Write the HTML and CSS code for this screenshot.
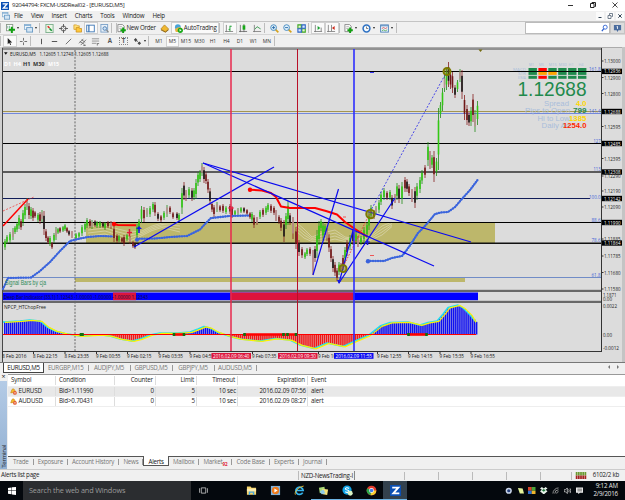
FILE: index.html
```html
<!DOCTYPE html>
<html lang="en">
<head>
    <meta charset="UTF-8">
    <title>92044794: FXCM-USDReal02 - [EURUSD,M5]</title>
    <link rel="stylesheet" href="styles.css">
</head>
<body>
    <!-- Icon shapes shared by the toolbars -->
    <svg class="defs" width="0" height="0">
        <symbol id="logo" viewBox="0 0 10 10"><rect width="10" height="10" fill="#0b4fb3"/><path d="M2 2.4h5.5L3 7.6h5.5" fill="none" stroke="#fff" stroke-width="1.7"/></symbol>
        <symbol id="windows" viewBox="0 0 10 10"><rect x=".5" y=".5" width="7" height="5.5" fill="#eef5fb" stroke="#8eb4d4"/><path d="M.5 1.5h7" stroke="#6ca0cc"/><rect x="3" y="4" width="6.5" height="5" fill="#d4e6f5" stroke="#6899c4"/></symbol>
        <symbol id="newchart" viewBox="0 0 10 10"><rect x=".5" y=".5" width="7" height="7" fill="#fff" stroke="#8a9a8a"/><path d="M2 5V2m2 3V2" stroke="#7a9"/><path d="M6.5 3v7M3 6.5h7" stroke="#12a012" stroke-width="2.2"/></symbol>
        <symbol id="market" viewBox="0 0 10 10"><rect x="1" y=".5" width="8" height="9" fill="#e9f7e4" stroke="#7cae8c"/><path d="M3 2.5l2 2" stroke="#e02020" stroke-width="1.6"/><path d="M5 5l2.5 2.5" stroke="#109030" stroke-width="1.8"/></symbol>
        <symbol id="target" viewBox="0 0 10 10"><circle cx="5" cy="5" r="2.8" fill="none" stroke="#555"/><path d="M5 0v4M5 6v4M0 5h4M6 5h4" stroke="#555"/></symbol>
        <symbol id="folder" viewBox="0 0 10 10"><path d="M1 1h3l1 1h2v4H1z" fill="#ffe07a" stroke="#d39a20" stroke-width=".8"/><path d="M3.5 4h3l1 1h2v4h-6z" fill="#ffc83a" stroke="#c98a18" stroke-width=".8"/></symbol>
        <symbol id="panel" viewBox="0 0 10 10"><rect x=".8" y="1.3" width="8.4" height="7.4" fill="#fff" stroke="#3c76b5"/><path d="M3.2 1v8" stroke="#3c76b5" stroke-width="1.4"/></symbol>
        <symbol id="tester" viewBox="0 0 10 10"><rect x="1" y=".5" width="7.5" height="8.5" fill="#e8f0f8" stroke="#7aa0c8"/><circle cx="5.3" cy="5" r="2" fill="#cfe4f7" stroke="#4a7ab0"/><path d="M7 6.6l2.5 2.6" stroke="#888" stroke-width="1.3"/></symbol>
        <symbol id="order" viewBox="0 0 10 10"><path d="M1 .5h5l2 2v6H1z" fill="#f7f7f7" stroke="#888"/><path d="M2.5 3h3m-3 2h3" stroke="#999" stroke-width=".7"/><path d="M6.8 4v6M3.8 7h6" stroke="#12a012" stroke-width="2.1"/></symbol>
        <symbol id="gold" viewBox="0 0 10 10"><path d="M1 5.5L5 1l4.5 4.5L6 9z" fill="#f0b830" stroke="#b07a10" stroke-width=".8"/><path d="M1 6.5L6 9l3.5-2.5" fill="none" stroke="#8a6010"/></symbol>
        <symbol id="auto" viewBox="0 0 10 10"><circle cx="4.3" cy="3.6" r="3.2" fill="#49a4d8"/><path d="M1 6c3-3 6-3 8-1L6 9H2z" fill="#e8b440"/><circle cx="7" cy="7" r="2.9" fill="#18a818"/><path d="M6.2 5.6l2.2 1.4-2.2 1.4z" fill="#fff"/></symbol>
        <symbol id="bars" viewBox="0 0 10 10"><path d="M1.5 1v8M0 8.3h9" stroke="#777" stroke-width=".9"/><path d="M5.5 2v6M5.5 2.5h2M4 6h1.5" stroke="#18a030"/></symbol>
        <symbol id="candle" viewBox="0 0 10 10"><path d="M1.5 1v8M0 8.3h9M5.5 0v9" stroke="#666" stroke-width=".9"/><rect x="4" y="1.5" width="3" height="4.8" fill="#18a818"/></symbol>
        <symbol id="line" viewBox="0 0 10 10"><path d="M1.5 1v8M0 8.3h9" stroke="#777" stroke-width=".9"/><path d="M2 6l2.5-3 4 2.5" fill="none" stroke="#3a9a50"/></symbol>
        <symbol id="zin" viewBox="0 0 10 10"><path d="M6 6l3.3 3.3" stroke="#d6a21c" stroke-width="1.8"/><circle cx="4" cy="4" r="3.2" fill="#dff0fb" stroke="#3f86bd"/><path d="M2.3 4h3.4M4 2.3v3.4" stroke="#2468a8"/></symbol>
        <symbol id="zout" viewBox="0 0 10 10"><path d="M6 6l3.3 3.3" stroke="#d6a21c" stroke-width="1.8"/><circle cx="4" cy="4" r="3.2" fill="#dff0fb" stroke="#3f86bd"/><path d="M2.3 4h3.4" stroke="#2468a8"/></symbol>
        <symbol id="tile" viewBox="0 0 10 10"><path d="M1 1h3.8v3.7H1zM5.4 5.3h3.8V9H5.4z" fill="#e4f5d8" stroke="#3ba51c" stroke-width="1.2"/><path d="M5.4 1h3.8v3.7H5.4zM1 5.3h3.8V9H1z" fill="#d9e8ff" stroke="#2a62c4" stroke-width="1.2"/></symbol>
        <symbol id="scroll" viewBox="0 0 10 10"><path d="M1.5 1v8M0 8.3h9M8 4v4" stroke="#777" stroke-width=".9"/><path d="M4 2.2l3 2.3-3 2.3z" fill="#18a030"/></symbol>
        <symbol id="shift" viewBox="0 0 10 10"><path d="M1.5 1v8M0 8.3h9M5 1v7" stroke="#777" stroke-width=".9"/><path d="M8.5 2.2l-3 2.3 3 2.3z" fill="#d02818"/></symbol>
        <symbol id="clock" viewBox="0 0 10 10"><circle cx="5" cy="5" r="3.8" fill="#f6fbff" stroke="#2f72c4" stroke-width="1.7"/><path d="M5 2.8V5h2" fill="none" stroke="#555" stroke-width=".8"/></symbol>
        <symbol id="template" viewBox="0 0 10 10"><rect x=".7" y="1" width="8.6" height="8" fill="#eef6ff" stroke="#4a80b8"/><path d="M1 2h8" stroke="#4a80b8"/><path d="M2 5l2-1 2 1 2-1" fill="none" stroke="#c33" stroke-width=".8"/><path d="M2 7.5l2-1 2 1 2-1" fill="none" stroke="#393" stroke-width=".8"/></symbol>
        <symbol id="cursor" viewBox="0 0 10 10"><path d="M3 1v7l1.7-1.6L5.8 9l1-.5-1.1-2.4H8z" fill="#222"/></symbol>
        <symbol id="cross" viewBox="0 0 10 10"><path d="M5 1v3M5 6v3M1 5h3M6 5h3" stroke="#555" stroke-width=".9"/></symbol>
        <symbol id="vline" viewBox="0 0 10 10"><path d="M5 2v6" stroke="#444"/></symbol>
        <symbol id="hline" viewBox="0 0 10 10"><path d="M2 5h6" stroke="#444"/></symbol>
        <symbol id="trend" viewBox="0 0 10 10"><path d="M2 8l6-6" stroke="#555" stroke-width=".9"/></symbol>
        <symbol id="channel" viewBox="0 0 10 10"><path d="M1 7l5-5M3 9l6-6M2 5l5 3M4 3l4 3" stroke="#555" stroke-width=".8"/><path d="M6 9.2h2.5" stroke="#444"/></symbol>
        <symbol id="fib" viewBox="0 0 10 10"><path d="M1 2h8M1 4.500h8M1 7h5" stroke="#777" stroke-width=".8"/><path d="M7 7v2.500M7 7.300h2" stroke="#555" stroke-width=".8"/></symbol>
        <symbol id="arrows" viewBox="0 0 10 10"><path d="M3 1l2 2.500-2 2-2-2.500zM7 5l2 2-2 2-2-2z" fill="#444"/><path d="M4 4l3 3" stroke="#777"/></symbol>
        <symbol id="bell" viewBox="0 0 10 10"><path d="M1 7c1-1 .5-5 3.300-6C7 1.500 7 4 8 6z" fill="#f5b72c" stroke="#c18416" stroke-width=".8"/><circle cx="7" cy="7" r="2.700" fill="#e3552c"/><path d="M5.500 7h3" stroke="#fff"/></symbol>
    </svg>

    <div class="titlebar">
        <svg class="icon"><use href="#logo"/></svg>
        <span class="title">92044794: FXCM-USDReal02 - [EURUSD,M5]</span>
        <svg class="controls" viewBox="0 0 60 11"><path d="M3 5.500h5" stroke="#333"/><path d="M25.500 3.500h3.500v4h-3.500zM27 3.500V2.500h3.500v4h-1" fill="none" stroke="#222"/><path d="M47.500 2.500l5 5m0-5l-5 5" stroke="#333" stroke-width=".9"/></svg>
    </div>
    <div class="menubar">
        <svg class="icon"><use href="#windows"/></svg>
        <nav class="menu"><span>File</span><span>View</span><span>Insert</span><span>Charts</span><span>Tools</span><span>Window</span><span>Help</span></nav>
        <div class="mdi">
            <svg viewBox="0 0 8 8"><path d="M2.500 5.500h3" stroke="#345"/></svg>
            <svg viewBox="0 0 8 8"><path d="M2 3.500h3v3H2zM3.500 3V1.500h3v3H5.500" fill="none" stroke="#567" stroke-width=".8"/></svg>
            <svg viewBox="0 0 8 8"><path d="M2.300 2.300l3.400 3.400m0-3.400L2.300 5.700" stroke="#345"/></svg>
        </div>
    </div>

    <div class="toolbar">
        <b class="grip"></b>
        <span class="tool drop"><svg><use href="#newchart"/></svg></span>
        <span class="tool drop"><svg><use href="#windows"/></svg></span>
        <b class="sep"></b>
        <span class="tool"><svg><use href="#market"/></svg></span>
        <span class="tool"><svg><use href="#target"/></svg></span>
        <span class="tool"><svg><use href="#folder"/></svg></span>
        <span class="tool active"><svg><use href="#panel"/></svg></span>
        <span class="tool"><svg><use href="#tester"/></svg></span>
        <b class="sep wide"></b>
        <span class="tool order"><svg><use href="#order"/></svg>New Order</span>
        <span class="tool"><svg><use href="#gold"/></svg></span>
        <span class="tool auto active"><svg><use href="#auto"/></svg>AutoTrading</span>
        <b class="sep"></b>
        <span class="tool active"><svg><use href="#bars"/></svg></span>
        <span class="tool"><svg><use href="#candle"/></svg></span>
        <span class="tool"><svg><use href="#line"/></svg></span>
        <b class="grip"></b>
        <span class="tool"><svg><use href="#zin"/></svg></span>
        <span class="tool"><svg><use href="#zout"/></svg></span>
        <span class="tool"><svg><use href="#tile"/></svg></span>
        <b class="grip"></b>
        <span class="tool active"><svg><use href="#scroll"/></svg></span>
        <span class="tool active"><svg><use href="#shift"/></svg></span>
        <b class="grip"></b>
        <span class="tool drop"><svg><use href="#order"/></svg></span>
        <span class="tool drop"><svg><use href="#clock"/></svg></span>
        <span class="tool drop"><svg><use href="#template"/></svg></span>
        <b class="sep"></b>
        <div class="search">
            <svg viewBox="0 0 8 10"><circle cx="4.800" cy="3.500" r="2.300" fill="none" stroke="#2a5fd0"/><path d="M3.200 5.200L1 8" stroke="#2a5fd0" stroke-width="1.400"/></svg>
        </div>
        <div class="chat"><svg viewBox="0 0 10 10"><path d="M1 1h8v6H6L5 9 4 7H1z" fill="#4a6c9e"/><path d="M5 2.500v3M4 3h1" stroke="#fff" stroke-width=".9"/></svg></div>
    </div>
    <div class="toolbar draw">
        <b class="grip"></b>
        <span class="tool active"><svg><use href="#cursor"/></svg></span>
        <span class="tool"><svg><use href="#cross"/></svg></span>
        <b class="sep"></b>
        <span class="tool"><svg><use href="#vline"/></svg></span>
        <span class="tool"><svg><use href="#hline"/></svg></span>
        <span class="tool"><svg><use href="#trend"/></svg></span>
        <span class="tool"><svg><use href="#channel"/></svg></span>
        <span class="tool"><svg><use href="#fib"/></svg></span>
        <span class="tool letter">A</span>
        <span class="tool letter"><u>T</u></span>
        <span class="tool drop"><svg><use href="#arrows"/></svg></span>
        <b class="sep"></b>
        <span class="period">M1</span><span class="period active">M5</span><span class="period">M15</span><span class="period">M30</span><span class="period">H1</span><span class="period">H4</span><span class="period">D1</span><span class="period">W1</span><span class="period">MN</span>
        <b class="sep"></b>
    </div>

    <!-- Chart window, drawn by chart.js -->
    <svg class="chart" id="chart" viewBox="0 47 625 316"></svg>

    <div class="chart-tabs">
        <span class="active">EURUSD,M5</span><span>EURGBP,M15</span><span>AUDJPY,M5</span><span>GBPUSD,M5</span><span>GBPJPY,M5</span><span>AUDUSD,M5</span>
        <svg viewBox="0 0 16 8"><path d="M4 2v4L2 4zM11 2v4l2-2z" fill="#777"/></svg>
    </div>

    <div class="terminal">
        <div class="side"><i>×</i><span>Terminal</span></div>
        <div class="panel">
            <div class="row head"><span>Symbol</span><span>Condition</span><span>Counter</span><span>Limit</span><span>Timeout</span><span>Expiration</span><span>Event</span></div>
            <div class="row odd"><span><svg><use href="#bell"/></svg>EURUSD</span><span>Bid&gt;1.11990</span><span>0</span><span>5</span><span>10 sec</span><span>2016.02.09 07:56</span><span>alert</span></div>
            <div class="row"><span><svg><use href="#bell"/></svg>AUDUSD</span><span>Bid&gt;0.70431</span><span>0</span><span>5</span><span>10 sec</span><span>2016.02.09 08:27</span><span>alert</span></div>
            <div class="blank"></div>
            <div class="term-tabs">
                <span>Trade</span><span>Exposure</span><span>Account History</span><span>News</span><span class="active">Alerts</span><span>Mailbox</span><span>Market<sub>92</sub></span><span>Code Base</span><span>Experts</span><span>Journal</span>
            </div>
        </div>
    </div>

    <div class="status">
        <span class="page">Alerts list page</span>
        <span class="profile">NZD-NewsTrading-I</span>
        <span class="cell"></span><span class="cell"></span><span class="cell"></span><span class="cell"></span><span class="cell"></span><span class="cell last"></span>
        <svg viewBox="0 0 12 8"><path d="M0 2h12" stroke="#6a9a30" stroke-width="4" stroke-dasharray="2 .5"/><path d="M0 6h12" stroke="#a52020" stroke-width="4" stroke-dasharray="2 .5"/></svg>
        <span class="kb">6102/2 kb</span>
    </div>

    <div class="taskbar">
        <div class="start"><svg viewBox="0 0 9 9"><path d="M0 1l4-.5V4H0zM4.500.4L9 0v4H4.500zM0 4.600h4v3.600L0 7.700zM4.500 4.600H9V9l-4.500-.6z" fill="#fff"/></svg></div>
        <div class="cortana">Search the web and Windows</div>
        <div class="apps">
            <span class="app view"><svg viewBox="0 0 12 12"><path d="M3 2.500h6v7H3zM.5 3v6m11-6v6" fill="none" stroke="#ddd"/></svg></span>
            <span class="app"><svg viewBox="0 0 12 12"><path d="M1 1.500h4l1 1.500h5v7.500H1z" fill="#f7d56a"/><path d="M1 4h10v3H1z" fill="#fdedb0"/><path d="M3 7h6v4H7.500V8.500h-3V11H3z" fill="#4aa8e0"/></svg></span>
            <span class="app"><svg viewBox="0 0 12 12"><rect x="1" y="1" width="10" height="10" fill="#7fb2dd"/><circle cx="6" cy="6" r="4" fill="#ee7b1c"/><path d="M4.800 3.800L8.300 6 4.800 8.200z" fill="#fff"/></svg></span>
            <span class="app"><svg viewBox="0 0 12 12"><path d="M9.500 8.300A4 4 0 1 1 10 6H3" fill="none" stroke="#35b5ee" stroke-width="1.900"/><path d="M1.500 10.500C0 8 5 2 10.500 1.200" fill="none" stroke="#f4c430" stroke-width="1"/></svg></span>
            <span class="app open"><svg viewBox="0 0 12 12"><path d="M1 3l6-1 1 6-6 1z" fill="#a8d878"/><path d="M4.500 4l6.500 1-1 6-5-1z" fill="#f2e27a"/><path d="M2 7l4-2 2 4-4 1z" fill="#8ecbe8"/></svg></span>
            <span class="app open"><svg viewBox="0 0 12 12"><circle cx="5.500" cy="5.500" r="5" fill="#12a5e8"/><path d="M7.600 3.800C6 2.300 3.500 3 3.700 4.400c.2 1.400 4 .8 3.900 2.500-.1 1.400-2.800 1.500-4 .2" fill="none" stroke="#fff" stroke-width="1.200"/><circle cx="9" cy="9" r="2.700" fill="#d9f2c4"/></svg></span>
            <span class="app open"><svg viewBox="0 0 12 12"><circle cx="6" cy="6" r="5.300" fill="#e33b2e"/><path d="M6 6L1.300 3.500A5.300 5.300 0 0 0 5 11.200z" fill="#2aa84a"/><path d="M6 6h5.300A5.300 5.300 0 0 1 5 11.200z" fill="#f8cf30"/><circle cx="6" cy="6" r="2.600" fill="#fff"/><circle cx="6" cy="6" r="2" fill="#3f7de8"/></svg></span>
            <span class="app open current"><svg viewBox="0 0 10 10"><use href="#logo"/></svg></span>
        </div>
        <div class="tray">
            <svg viewBox="0 0 8 8"><circle cx="4" cy="4" r="3.300" fill="#c9d4e8"/><circle cx="4" cy="4" r="1.700" fill="#26407c"/></svg>
            <svg viewBox="0 0 8 8"><path d="M1 1l5 .5 1.500 5.500L3 7z" fill="#e4f29a"/></svg>
            <svg viewBox="0 0 8 8"><path d="M0 0h4v4H0z" fill="#d8442c"/><path d="M4 0h4v4H4z" fill="#49a33a"/><path d="M0 4h4v4H0z" fill="#2d6fd0"/><path d="M4 4h4v4H4z" fill="#f0b52c"/></svg>
            <svg viewBox="0 0 8 8"><path d="M2 0l2 1.500L6 0l2 1.500-2 1.500 2 1.500L4 8 0 4.500 2 3 0 1.500z" fill="#e8f2ea"/><path d="M4 2l2 1.500L4 5 2 3.500z" fill="#1f7a3c"/></svg>
            <svg viewBox="0 0 8 8"><path d="M1 7a6 6 0 0 1 6-6M3 7a4 4 0 0 1 4-4M5 7a2 2 0 0 1 2-2" fill="none" stroke="#999"/></svg>
            <svg viewBox="0 0 8 8"><path d="M0 3h1.500L3.500 1v6l-2-2H0z" fill="none" stroke="#ddd" stroke-width=".8"/><path d="M5 2.500q1 1.500 0 3M6.500 1.500q1.500 2.500 0 5" fill="none" stroke="#ddd" stroke-width=".8"/></svg>
            <svg viewBox="0 0 8 8"><path d="M0 .5h8v5.500H4L2.500 8V6H0z" fill="#eee"/><path d="M1.500 2.300h5m-5 1.800h5" stroke="#333" stroke-width=".7"/></svg>
        </div>
        <div class="time">9:12 AM<br>2/9/2016</div>
    </div>

    <script src="chart.js"></script>
</body>
</html>
```

FILE: styles.css
```css
* {
    margin: 0;
    padding: 0;
    box-sizing: border-box;
}

body {
    width: 625px;
    height: 500px;
    overflow: hidden;
    display: flex;
    flex-direction: column;
    background: #f0f0f0;
    color: #1c1c1c;
    font-family: "Open Sans", "Noto Sans", sans-serif;
    font-size: 6.2px;
    letter-spacing: -0.25px;
    line-height: 1;
}

i, u {
    font-style: normal;
    text-decoration: none;
}

.defs {
    display: none;
}

/* Title and menu */
.titlebar {
    height: 11px;
    flex: none;
    display: flex;
    align-items: center;
    background: #fff;
}

.titlebar .icon {
    width: 8px;
    height: 8px;
    margin: 0 3px 0 1px;
}

.title {
    font-size: 6.1px;
    letter-spacing: -0.3px;
}

.controls {
    width: 60px;
    height: 11px;
    margin-left: auto;
}

.menubar {
    height: 11px;
    flex: none;
    display: flex;
    align-items: center;
    border-bottom: 1px solid #c4c4c4;
}

.menubar .icon {
    width: 8px;
    height: 8px;
    margin: 0 4px 0 2px;
}

.menu {
    display: flex;
    gap: 8.1px;
}

.mdi {
    display: flex;
    gap: 2px;
    margin-left: auto;
    padding-right: 1px;
}

.mdi svg {
    width: 8px;
    height: 8px;
    background: #fbfbfb;
}

/* Toolbars */
.toolbar {
    height: 13px;
    flex: none;
    display: flex;
    align-items: center;
    border-bottom: 1px solid #d6d6d6;
}

.toolbar.draw {
    height: 12px;
    border-bottom: none;
}

.tool {
    width: 13.7px;
    height: 12px;
    display: flex;
    align-items: center;
    justify-content: center;
    white-space: nowrap;
}

.tool svg {
    width: 9px;
    height: 9px;
    flex: none;
}

.tool.active,
.period.active {
    background: #fafafa;
    border: 1px solid #d0d0d0;
}

.tool.drop {
    width: 18px;
    gap: 2px;
}

.tool.drop::after {
    content: "";
    border: 1.5px solid transparent;
    border-top: 2px solid #222;
    border-bottom: none;
}

.tool.order {
    width: 40px;
    justify-content: flex-start;
}

.tool.auto {
    width: 48px;
    gap: 1px;
}

.grip {
    width: 3px;
    height: 10px;
    border-left: 1px solid #bdbdbd;
}

.sep {
    width: 4px;
    height: 10px;
    border-left: 1px solid #bdbdbd;
}

.sep.wide {
    width: 6px;
    border-right: 1px solid #bdbdbd;
}

.search {
    width: 85px;
    height: 12px;
    margin-left: auto;
    background: #fff;
    border: 1px solid #bbb;
    display: flex;
    align-items: center;
    justify-content: flex-end;
    padding-right: 1px;
}

.search svg {
    width: 7px;
    height: 9px;
}

.chat {
    width: 15px;
    height: 12px;
    background: #dcdcdc;
    border: 1px solid #c4c4c4;
    display: flex;
    align-items: center;
    justify-content: center;
}

.chat svg {
    width: 9px;
    height: 9px;
}

.letter {
    font-weight: bold;
    color: #555;
}

.letter u {
    border: 1px dotted #888;
    padding: 0 1.5px;
}

.period {
    width: 13.5px;
    height: 11px;
    display: flex;
    align-items: center;
    justify-content: center;
    font-size: 5px;
    letter-spacing: 0;
    color: #333;
}

/* Chart */
.chart {
    width: 625px;
    height: 316px;
    flex: none;
    display: block;
}

.chart text {
    font-family: "Open Sans", "Noto Sans", sans-serif;
    font-size: 5.8px;
    letter-spacing: 0;
}

.chart .info {
    font-family: "Liberation Sans", Arial, sans-serif;
    font-size: 7.6px;
}

.chart .price {
    font-family: "Liberation Sans", Arial, sans-serif;
    font-size: 20px;
}

.chart .tiny {
    font-size: 3.6px;
}

/* Chart tabs */
.chart-tabs {
    height: 11px;
    flex: none;
    display: flex;
    padding-left: 3px;
    color: #777;
}

.chart-tabs span {
    width: 42px;
    height: 6px;
    margin-top: 2px;
    text-align: center;
    border-right: 1px solid #999;
    line-height: 6px;
}

.chart-tabs span:nth-child(2) {
    width: 44.5px;
}

.chart-tabs .active {
    width: 41px;
    height: 10px;
    margin-top: 0;
    padding-top: 2px;
    background: #fff;
    color: #111;
    border: 1px solid #444;
    border-top: none;
}

.chart-tabs svg {
    width: 16px;
    height: 8px;
    margin-left: auto;
    margin-right: 3px;
}

/* Terminal */
.terminal {
    height: 95px;
    flex: none;
    display: flex;
}

.side {
    width: 8px;
    display: flex;
    flex-direction: column;
    justify-content: space-between;
    align-items: center;
    padding-bottom: 1px;
    background: linear-gradient(#f0f0f0 7px, #b4cbe6 7px, #92b0d2);
    border-right: 1px solid #eee;
}

.side i {
    font-size: 7px;
    line-height: 6px;
}

.side span {
    writing-mode: vertical-rl;
    transform: rotate(180deg);
    font-size: 6px;
}

.panel {
    flex: 1;
    display: flex;
    flex-direction: column;
    background: #fff;
    border-top: 1px solid #999;
}

.row {
    height: 10px;
    display: grid;
    grid-template-columns: 48px 59px 41px 41px 41px 70px 1fr;
    align-items: center;
    border-bottom: 1px solid #eee;
}

.row.head {
    height: 12px;
}

.row.odd {
    background: #e8e8e8;
}

.row span {
    height: 9px;
    display: flex;
    align-items: center;
    padding: 0 2px 0 3px;
    border-right: 1px solid #ddd;
    letter-spacing: -0.15px;
}

.row span:nth-child(n+3) {
    justify-content: flex-end;
}

.row:not(.head) span:nth-child(n+3) {
    padding-right: 1px;
}

.row span:last-child {
    justify-content: flex-start;
    border-right: none;
}

.row svg {
    width: 7px;
    height: 7px;
    margin: 0 1.5px 0 -1px;
}

.blank {
    flex: 1;
}

.term-tabs {
    height: 13px;
    display: flex;
    background: #f0f0f0;
    border-top: 1px solid #555;
    color: #777;
    padding-left: 1px;
}

.term-tabs span {
    height: 6px;
    margin-top: 2px;
    padding: 0 4.1px;
    border-right: 1px solid #999;
    line-height: 6px;
    letter-spacing: -0.23px;
    white-space: nowrap;
}

.term-tabs .active {
    height: 10px;
    margin-top: -1px;
    padding-top: 3px;
    background: #fff;
    color: #111;
    border: 1px solid #555;
    border-top: none;
}

.term-tabs sub {
    color: #e02030;
    font-size: 4.5px;
    font-weight: bold;
    line-height: 0;
}

/* Status bar */
.status {
    height: 12px;
    flex: none;
    display: flex;
    align-items: center;
    border-top: 1px solid #ccc;
}

.page {
    width: 298px;
    padding-left: 1px;
}

.profile {
    width: 57px;
    height: 9px;
    padding-left: 2px;
    line-height: 9px;
    border-left: 1px solid #bbb;
    border-right: 1px solid #888;
    white-space: nowrap;
}

.cell {
    width: 34px;
    height: 8px;
    border-right: 1px solid #bbb;
}

.cell:nth-child(3) {
    width: 50px;
}

.cell.last {
    width: 31px;
}

.status svg {
    width: 12px;
    height: 7px;
    margin-left: 3px;
}

.kb {
    margin-left: auto;
    padding-right: 6px;
}

/* Taskbar */
.taskbar {
    height: 19px;
    flex: none;
    display: flex;
    background: #04080d;
    color: #e8e8e8;
}

.start {
    width: 23px;
    display: flex;
    align-items: center;
    justify-content: center;
}

.start svg {
    width: 8px;
    height: 8px;
}

.cortana {
    width: 168px;
    background: #2b2d30;
    color: #9b9b9b;
    font-size: 7.3px;
    letter-spacing: -0.15px;
    line-height: 19px;
    padding-left: 6px;
}

.apps {
    display: flex;
}

.app {
    width: 24px;
    display: flex;
    align-items: center;
    justify-content: center;
    border-bottom: 1px solid transparent;
}

.app svg {
    width: 11px;
    height: 11px;
}

.app.view {
    width: 25px;
    margin-right: 23px;
}

.app.view svg {
    width: 9px;
    height: 9px;
}

.app.open {
    border-bottom-color: #6db4e4;
}

.app.current {
    background: #33414d;
}

.tray {
    display: flex;
    align-items: center;
    gap: 4.3px;
    margin-left: auto;
}

.tray svg {
    width: 7.5px;
    height: 7.5px;
}

.time {
    width: 42px;
    padding: 0.5px 7px 0 0;
    text-align: right;
    font-size: 6.2px;
    letter-spacing: -0.15px;
    line-height: 8px;
    white-space: nowrap;
}
```

FILE: chart.js
```js
const chart = document.getElementById("chart");
let out = "";

function rect(x, y, w, h, fill, extra = "") {
    out += `<rect x="${x}" y="${y}" width="${w}" height="${h}" fill="${fill}" ${extra}/>`;
}

function line(x1, y1, x2, y2, color, width = 1, dash = "") {
    out += `<path d="M${x1} ${y1}L${x2} ${y2}" stroke="${color}" stroke-width="${width}" stroke-dasharray="${dash}"/>`;
}

function curve(points, color, width, extra = "") {
    out += `<polyline points="${points.join(" ")}" fill="none" stroke="${color}" stroke-width="${width}" stroke-linejoin="round" ${extra}/>`;
}

function text(x, y, str, fill, width = 0, cls = "", extra = "") {
    const fit = width ? `textLength="${width}" lengthAdjust="spacingAndGlyphs"` : "";
    out += `<text x="${x}" y="${y}" fill="${fill}" class="${cls}" ${fit} ${extra}>${str}</text>`;
}

// Linear interpolation along a list of [x, y] points
function valueAt(points, x) {
    for (let i = 1; i < points.length; i++) {
        const [x0, y0] = points[i - 1];
        const [x1, y1] = points[i];
        if (x <= x1) return y0 + (y1 - y0) * (x - x0) / (x1 - x0);
    }
    return points[points.length - 1][1];
}

// Window frame
rect(0, 47, 625, 316, "#ababab");
rect(0, 47, 2, 316, "#d0d0d0");
rect(2, 48, 620, 314, "#dcdcdc");
line(2, 49, 602, 49, "#484848", 1.2);
line(2.5, 48, 2.5, 362, "#484848");
rect(622, 47, 3, 316, "#c4c4c4");

// Zones
rect(86, 223, 409, 20, "#bdb76b");
rect(75, 278, 390, 4, "#bdb76b");

// Moving average fans inside the zone
for (let k = 0; k < 4; k++) {
    const d = k * 3;
    curve([[88, 227 + d], [105, 225 + d], [118, 229 + d], [130, 232 + d], [142, 231 + d / 2], [152, 226 + d / 2], [162, 223 + d / 2], [180, 223 + d]], "#dcd9b4", 0.7);
    curve([[296, 222 + d], [304, 229 + d], [312, 237 + d / 2], [322, 233 + d], [335, 230 + d], [345, 237 + d / 2], [357, 239], [370, 236 + d / 2], [382, 226 + d], [392, 222 + d / 2]], "#dcd9b4", 0.7);
}

// Horizontal levels
line(3, 71.5, 601, 71.5, "#000", 1.2);
line(3, 111.5, 601, 111.5, "#a39550", 1);
line(3, 113.5, 601, 113.5, "#7288dc", 1);
line(3, 143.5, 601, 143.5, "#000", 1.1);
line(3, 172, 601, 172, "#303030", 1.5);
line(3, 198.5, 590, 198.5, "#101c58", 1.1);
line(3, 222.5, 601, 222.5, "#000", 1.1);
line(3, 243.2, 601, 243.2, "#111", 1.4);
line(3, 277.5, 601, 277.5, "#6482c4", 0.9);
line(75, 50, 75, 351, "#666", 1, "2 1.4");

// Candles: x, high, low, 1 for up and 0 for down
const candles = [
    [5,239,250,1],[7,235,244,1],[10,232,243,1],[13,228,240,1],[15,226,234,1],[17,222,232,1],[19,215,229,1],[21,219,230,0],[23,210,226,1],[25,204,219,1],
    [27,198,210,1],[29,203,219,0],[31,207,219,1],[33,208,221,0],[35,211,218,0],[38,213,222,1],[40,212,224,0],[42,210,222,1],[44,211,235,0],[46,229,241,0],
    [48,236,244,0],[50,236,246,1],[52,242,249,0],[54,233,243,1],[56,227,240,1],[58,228,234,1],[60,227,233,0],[63,226,232,1],[65,224,231,1],[67,227,233,0],
    [69,230,236,0],[72,231,238,0],[76,233,240,1],[79,232,238,1],[82,225,236,1],[85,222,232,1],[87,218,228,1],[90,219,228,0],[92,220,229,1],[95,220,227,0],
    [97,221,228,1],[100,221,228,1],[103,222,228,0],[105,222,230,1],[108,221,228,0],[111,221,229,0],[114,226,242,0],[117,234,243,0],[119,235,242,1],[122,237,243,0],
    [124,235,246,0],[127,234,241,1],[130,236,244,0],[133,241,248,0],[135,242,249,0],[137,224,239,1],[139,219,231,1],[141.5,206,223,1],[144,207,222,0],[147,208,217,1],
    [150,206,217,1],[153,202,212,1],[155,202,216,0],[158,212,221,0],[161,215,222,0],[164,211,220,1],[167,205,217,1],[170,206,214,0],[173,212,219,0],[177,212,220,0],
    [179,213,222,1],[182,188,214,1],[184,182,200,0],[186,190,201,0],[189,187,198,1],[192,188,201,0],[194,188,200,1],[196,179,199,1],[198,172,186,1],[200,170,182,1],
    [202,163,176,1],[204,167,183,0],[206,172,184,0],[208,179,193,0],[210,188,205,0],[212,202,212,0],[214,205,217,0],[217,202,212,1],[220,205,212,0],[223,204,213,0],
    [226,206,214,1],[230,204,214,0],[232,206,218,0],[235,210,216,1],[238,208,215,1],[241,207,213,1],[244,207,213,0],[247,209,215,0],[250,212,219,0],[252,212,222,1],
    [254,215,228,0],[257,217,225,0],[260,210,219,1],[263,208,217,0],[266,206,215,1],[268,203,212,1],[271,204,213,0],[274,206,215,0],[276,210,221,0],[279,215,224,0],
    [281,218,231,0],[284,220,242,0],[286,213,229,1],[288,201,225,1],[290,213,225,0],[293,217,239,0],[296,227,249,0],[299,240,256,0],[302,247,258,0],[305,252,259,1],
    [307,248,256,1],[310,247,256,0],[313,250,275,0],[315,246,262,0],[317,230,258,1],[319,221,245,1],[321,219,231,1],[323,222,240,1],[325,224,235,1],[327,228,241,0],
    [329,234,252,0],[331,246,262,0],[333,256,272,0],[335,262,276,0],[337,268,281,0],[339,262,275,1],[341,263,272,0],[343,255,270,0],[345,247,262,1],[347,240,256,0],
    [350,235,250,1],[353,229,245,0],[356,232,244,1],[358,236,247,0],[361,236,245,1],[364,227,243,1],[367,222,238,1],[369,212,230,1],[371,205,219,1],[374,210,219,0],
    [376,206,214,1],[379,200,213,1],[381,192,205,1],[384,188,200,1],[387,191,200,0],[390,190,200,1],[392,195,209,0],[395,194,203,0],[397,183,200,1],[399,185,203,0],
    [402,182,204,1],[405,177,192,0],[407,179,192,0],[409,184,196,0],[412,189,202,0],[415,187,208,0],[417,183,200,1],[420,177,193,1],[422,170,184,1],[425,165,178,0],
    [428,142,166,1],[430,151,169,0],[432,155,168,1],[434,151,182,0],[436.5,158,176,1],[438.5,108,170,1],[440.5,102,118,1],[442.5,88,111,1],[444.5,75,92,1],[446.5,68,90,1],
    [448.5,62,87,0],[450.5,71,89,0],[452.5,72,93,0],[455,85,98,0],[457.5,80,92,1],[460,69,82,1],[462,70,99,0],[464.5,95,120,0],[467,105,125,0],[469,112,126,0],
    [471,107,126,1],[473,94,122,0],[475,110,132,1],[477.5,101,125,1]
];

candles.forEach(([x, high, low, up], i) => {
    const size = low - high;
    const pale = i % 7 === 3;
    line(x, high, x, low, up ? "#218a18" : "#86201f", 0.8);
    rect(x - 0.8, high + size * 0.2, 1.6, size * 0.55, pale ? "#b99090" : up ? "#32c814" : i % 3 ? "#701818" : "#161616");
});

// Trailing dots
const dotted = 'stroke-linecap="round" stroke-dasharray="0.1 2.4"';
[
    [[3, 289], [8, 278], [31, 277.5], [40, 271], [50, 262], [60, 251], [70, 241], [80, 238.5], [88, 237], [100, 236], [113, 236.5]],
    [[137, 238.7], [155, 238.5], [170, 237], [187, 236], [200, 229.5], [206, 223], [211, 218], [230, 216], [249, 215.5]],
    [[368, 261], [384, 261], [392, 258], [402, 256], [406, 251], [411, 244], [418, 233], [425, 226], [435, 214], [441, 212.5], [448, 212], [455, 207], [461, 200], [470, 190], [477.5, 180]]
].forEach(points => {
    curve(points, "#4a70e0", 1.4);
    curve(points, "#3a64dc", 2.3, dotted);
});
[
    [[114, 224], [118, 225], [136, 225.2]],
    [[250, 189.7], [262, 190.5], [271, 193], [276, 197], [281, 206.5], [290, 208], [315, 208], [326, 211], [337, 214.5], [345, 222], [355, 229], [367, 236.5]]
].forEach(points => {
    curve(points, "#f00", 2);
    out += `<circle cx="${points[0][0]}" cy="${points[0][1]}" r="2.2" fill="#f00"/>`;
});
out += `<circle cx="368" cy="261.3" r="2.2" fill="#3a62dc"/><circle cx="137" cy="239.7" r="2" fill="#3a62dc"/>`;

// Trend lines
[[203, 163, 471, 242], [203, 163, 434, 266], [134, 247, 274, 167], [313, 275, 338.5, 189], [339, 283, 353.5, 229], [339, 283, 395, 198]]
    .forEach(p => line(...p, "#0a0af0", 1.2));
line(370, 212, 446, 73, "#3434e8", 0.9, "2 1.6");
line(342, 269, 371, 211, "#f03030", 0.9, "1.6 1.4");
line(3, 226, 28, 199, "#f00", 1.5);
line(3, 211, 34, 197, "#e44", 0.8, "2 1.5");

// Swing markers
[[447, 71.5, 4.5], [370.5, 214, 5.2], [343, 268.5, 4.5]].forEach(([x, y, r]) => {
    out += `<circle cx="${x}" cy="${y}" r="${r - 1}" fill="#7a7a10" fill-opacity=".45" stroke="#7d7a00" stroke-width="2"/>`;
});
out += `<path d="M339 284l-2-4h4zM139 226l3 3h-6z" fill="#1818e0"/>`;
line(139, 227, 139, 233, "#1818e0", 1.6);
line(367.5, 239, 367.5, 245, "#1818e0", 1.6);
line(365, 242, 370, 242, "#1818e0");
line(129.5, 229, 129.5, 236, "#e01838", 1.5);
line(127, 232.5, 132, 232.5, "#e01838", 1.4);
line(228.5, 208, 233.5, 208, "#e01838", 1.6);
line(343, 217, 346, 217, "#e55");
line(370, 255.5, 374, 255.5, "#e55");
line(370, 72.5, 374, 72.5, "#33e");
out += `<path d="M478.5 49.5h4l-2 2.5z" fill="#756c10"/>`;

// Deep bar strip
rect(3, 289.8, 599, 2.2, "#686868");
rect(3, 292.5, 475, 7.7, "#0000ff");
rect(113, 292.5, 23, 7.7, "#dc143c");
rect(230.5, 292.5, 123, 7.7, "#dc143c");
rect(3, 300.8, 599, 2.2, "#686868");
text(4, 298.5, "Deep Bar Indicator (33,1) 1.12343 -1.00000 -1.00000 -1.00000 1.12343", "#101040", 144);

// Histogram
const hist = [[3, 322], [20, 321], [30, 320], [40, 321], [47, 327], [55, 331], [65, 333.5], [80, 336], [100, 334.8], [110, 336], [120, 339], [132, 341], [140, 339], [150, 335], [160, 333], [178, 333], [190, 332], [198, 329], [204, 326.5], [210, 328], [217, 332], [230, 336.5], [240, 339], [260, 341], [275, 338.5], [290, 340], [300, 345], [314, 348.5], [327, 343], [343, 346.5], [355, 341], [368, 335.5], [380, 326], [390, 322.5], [408, 322], [420, 325], [428, 322.5], [437, 321], [443, 314], [448, 307.5], [458, 305], [463, 308], [470, 315], [476, 322]];
const zero = 334.5;
for (let x = 4; x < 476; x += 1.95) {
    const y = valueAt(hist, x);
    rect(x, Math.min(y, zero), 1.5, Math.abs(y - zero), y < zero ? "#1010f0" : "#f01818");
}
curve(hist, "#20e0f0", 1.4);
curve(hist.map(([x, y]) => [Math.min(x + 2, 476), y + 0.4]), "#fff000", 1.2);
line(3, zero, 476, zero, "#f00", 1.1);
[[174, 184], [244, 297], [408, 427]].forEach(([a, b]) => line(a, zero, b, zero, "#f00", 2.6));
[81, 82.5, 174, 184, 244.5, 283.5, 287.5, 296, 408.5, 426.5].forEach(x => rect(x - 1.3, 333, 2.6, 3, "#107010"));
text(4, 308.5, "NPCP_HTChopFree", "#222", 42);

// Session lines
rect(230, 49, 2, 302, "#e8284e", 'fill-opacity=".75"');
rect(297, 49, 1, 302, "#b81028");
rect(353, 49, 2, 302, "#2a2aff", 'fill-opacity=".78"');

// Axes
line(601.5, 48, 601.5, 352, "#333", 1);
line(3, 351.5, 602, 351.5, "#333", 1);
line(0, 362.5, 625, 362.5, "#777", 1);
[["1.13000", 61], ["1.12900", 77.5], ["1.12800", 93.5], ["1.12595", 126.5], ["1.12395", 158.5], ["1.12290", 176], ["1.12190", 191], ["1.12090", 207], ["1.11885", 239], ["1.11785", 256], ["1.11680", 272.5], ["1.11580", 289]].forEach(([label, y]) => {
    line(602, y, 603.5, y, "#333");
    text(604, y + 2, label, "#222", 16.5);
});
[["1.12936", 71.4], ["1.12688", 111.5], ["1.12485", 143.5], ["1.12308", 172], ["1.12142", 198.5], ["1.11990", 222.5], ["1.11864", 243]].forEach(([label, y]) => {
    rect(602, y - 2.7, 20, 5.4, "#000");
    text(604, y + 2, label, "#fff", 16.5);
});
text(603, 296.5, "1.1871", "#222", 13.5);
text(603, 300.7, "0.00", "#222", 9);
text(603, 307.5, "0.0022", "#222", 14);
text(603, 336.8, "0.00", "#222", 9);
text(603, 350, "-0.0012", "#222", 16);

// Fibonacci labels
[["161.8", 589, 70.5], ["141.4", 589, 112.7], ["127", 593.5, 142.5], ["113", 593.5, 171], ["100.0", 589, 198.5], ["88.6", 591.5, 221.5], ["78.6", 591.5, 242], ["61.8", 591.5, 277]].forEach(([label, x, y]) => {
    text(x, y, label, "#3c64d8", 600.5 - x);
});

// Time scale
[["8 Feb 2016", 2], ["8 Feb 22:15", 33], ["8 Feb 23:35", 64.5], ["9 Feb 00:55", 96], ["9 Feb 02:15", 127], ["9 Feb 03:35", 158.5], ["9 Feb 04:55", 189.5], ["9 Feb 07:35", 252], ["9 Feb 10:15", 318], ["9 Feb 12:55", 377], ["9 Feb 14:15", 408], ["9 Feb 15:35", 439.5], ["9 Feb 16:55", 470.5]].forEach(([label, x]) => {
    line(x + 0.5, 351, x + 0.5, 354, "#333");
    text(x, 358, label, "#111", 24.5);
});
[["2016.02.09 06:40", 211.5, "#dc143c"], ["2016.02.09 09:30", 278, "#dc143c"], ["2016.02.09 11:55", 334, "#0c0cf0"]].forEach(([label, x, fill]) => {
    rect(x, 353, 39.5, 5.8, fill);
    text(x + 1.5, 358, label, "#fff", 36.5);
});

// Header and signal table
out += `<path d="M4 52.3h3.6l-1.8 2.4z" fill="#111"/>`;
text(10, 55.5, "EURUSD,M5", "#111", 26);
text(39.5, 55.5, "1.12605 1.12748 1.12605 1.12688", "#111", 69);
[["D1", 4, "#fff", 7], ["H4", 13.5, "#fff", 7.5], ["H1", 23, "#333", 7.5], ["M30", 33, "#333", 11.5], ["M15", 48, "#fff", 11]].forEach(([label, x, fill, w]) => {
    text(x, 65.5, label, fill, w, "", 'font-weight="bold"');
});
text(5, 285, "Signal Bars by cja", "#2e8b57", 41, "info");

["M1", "M5", "M15", "M30", "H1", "H4"].forEach((label, i) => {
    text(529 + i * 9.9, 65.5, label, "#a9bddb", label.length > 2 ? 8 : 5, "tiny");
});
["MACD", "STR", "EMA"].forEach((label, row) => {
    text(row ? 518 : 513, 70.8 + row * 4, label, "#a9bddb", row ? 8 : 13, "tiny");
    for (let i = 0; i < 6; i++) {
        let fill = "#1f8a4c";
        if (i === 1) fill = row === 1 ? "#ffa500" : "#f00";
        if (i === 2 && row === 1) fill = "#ffa500";
        rect(528.5 + i * 9.9, 68 + row * 3.9, 8.4, 3, fill);
    }
});
text(517.5, 96.3, "1.12688", "#1f8a4c", 69, "price");
[["Spread", 544, 106, 25, "4.0", 576, 10.5, "#ffd700"], ["Pips to Open", 525, 113.3, 45, "799", 573, 13.5, "#1f8a4c"], ["Hi to Low", 537.5, 120.6, 32, "1385", 569, 17.5, "#ffd700"], ["Daily Av", 541.5, 128, 28, "1254.0", 563, 23.5, "#ff2a00"]].forEach(([label, x, y, w, num, nx, nw, fill]) => {
    text(x, y, label, "#a9bddb", w, "info");
    text(nx, y, num, fill, nw, "info", 'font-weight="bold"');
});

chart.innerHTML = out;
```
